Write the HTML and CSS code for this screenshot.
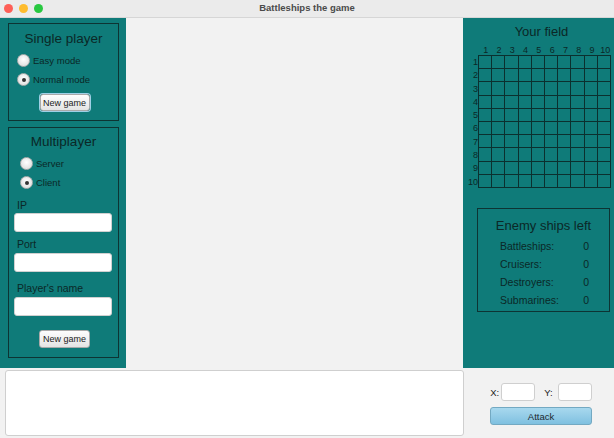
FILE: index.html
```html
<!DOCTYPE html>
<html>
<head>
<meta charset="utf-8">
<link rel="stylesheet" href="styles.css">
</head>
<body>
<div class="window">
  <div class="titlebar">
    <div class="lights"><span class="light red"></span><span class="light yellow"></span><span class="light green"></span></div>
    <div class="title">Battleships the game</div>
  </div>
  <div class="main">
    <div class="left">
      <div class="box single">
        <div class="box-title">Single player</div>
        <label class="radio"><span class="dot"></span>Easy mode</label>
        <label class="radio"><span class="dot on"></span>Normal mode</label>
        <div class="btn-row"><button class="btn">New game</button></div>
      </div>
      <div class="box multi">
        <div class="box-title">Multiplayer</div>
        <label class="radio r2"><span class="dot"></span>Server</label>
        <label class="radio r2"><span class="dot on"></span>Client</label>
        <div class="field-label first">IP</div>
        <div class="input"></div>
        <div class="field-label">Port</div>
        <div class="input"></div>
        <div class="field-label name">Player's name</div>
        <div class="input"></div>
        <div class="btn-row b2"><button class="btn">New game</button></div>
      </div>
    </div>
    <div class="center"></div>
    <div class="right">
      <div class="field-title">Your field</div>
      <div class="board">
        <div class="corner"></div>
        <div class="cols"><span>1</span><span>2</span><span>3</span><span>4</span><span>5</span><span>6</span><span>7</span><span>8</span><span>9</span><span>10</span></div>
        <div class="rows"><span>1</span><span>2</span><span>3</span><span>4</span><span>5</span><span>6</span><span>7</span><span>8</span><span>9</span><span>10</span></div>
        <div class="grid" id="grid"></div>
      </div>
      <div class="ships">
        <div class="ships-title">Enemy ships left</div>
        <div class="ship-row"><span>Battleships:</span><span>0</span></div>
        <div class="ship-row"><span>Cruisers:</span><span>0</span></div>
        <div class="ship-row"><span>Destroyers:</span><span>0</span></div>
        <div class="ship-row"><span>Submarines:</span><span>0</span></div>
      </div>
    </div>
  </div>
  <div class="bottom">
    <div class="log"></div>
    <div class="controls">
      <div class="coords">
        <span class="clabel">X:</span><div class="cinput"></div>
        <span class="clabel y">Y:</span><div class="cinput"></div>
      </div>
      <button class="attack">Attack</button>
    </div>
  </div>
</div>
<script>
  var g = document.getElementById('grid');
  for (var i = 0; i < 100; i++) { var c = document.createElement('div'); c.className = 'cell'; g.appendChild(c); }
</script>
</body>
</html>
```
FILE: styles.css
```css
* { box-sizing: border-box; }
html, body { margin: 0; padding: 0; }
body {
  width: 614px; height: 438px; overflow: hidden;
  font-family: "Liberation Sans", Arial, sans-serif;
  background: #f2f2f2;
}
.window { width: 614px; height: 438px; display: flex; flex-direction: column; }
.titlebar {
  height: 18px; background: #ebebeb; border-bottom: 1px solid #d6d6d6;
  display: flex; align-items: center; position: relative;
}
.lights { display: flex; gap: 6px; padding-left: 4px; }
.light { width: 9px; height: 9px; border-radius: 50%; display: block; }
.red { background: #fe5f57; }
.yellow { background: #febc2e; }
.green { background: #28c840; }
.title {
  position: absolute; left: 0; right: 0; top: 2px; text-align: center;
  font-size: 9.5px; font-weight: bold; color: #4a4a4a;
}
.main { display: flex; height: 350px; }
.left {
  width: 126px; background: #0f7b79; padding: 5px 7px 0 8px;
  display: flex; flex-direction: column; gap: 6px; color: #0b2827;
}
.box { border: 1px solid #0d3433; }
.single { height: 98px; padding-top: 7px; }
.multi { height: 231px; padding-top: 6px; }
.box-title { text-align: center; font-size: 13.5px; color: #0b2827; }
.radio { display: flex; align-items: center; font-size: 9.5px; height: 19px; padding-left: 8px; color: #0b2827; }
.single .box-title { margin-bottom: 5px; }
.multi .box-title { margin-bottom: 5px; }
.r2 { padding-left: 11px; }
.dot {
  width: 13px; height: 13px; border-radius: 50%; margin-right: 3px;
  background: radial-gradient(circle at 50% 40%, #ffffff, #d8d8d8);
  border: 1px solid #b0b0b0; position: relative; display: block;
}
.dot.on::after {
  content: ""; position: absolute; left: 3.5px; top: 3.5px; width: 4px; height: 4px;
  border-radius: 50%; background: #333;
}
.btn-row { display: flex; justify-content: center; margin-top: 5px; padding-left: 2px; }
.btn {
  font-family: "Liberation Sans", Arial, sans-serif; font-size: 9px; color: #222;
  height: 17px; width: 50px; padding: 0; border-radius: 3px;
  background: linear-gradient(#fdfdfd, #e4e4e4); border: 1px solid #a9a9a9;
  box-shadow: 0 0 0 1px #9fd0e6;
}
.b2 .btn { box-shadow: none; height: 18px; width: 51px; }
.field-label { font-size: 10.5px; line-height: 12px; margin: 6px 0 3px 8px; color: #0b2827; }
.field-label.first { margin-top: 7px; margin-bottom: 2px; }
.field-label.name { margin-top: 10px; margin-bottom: 3px; }
.input {
  height: 19px; margin: 0 6px 0 5px; background: #fff; border-radius: 3px;
  border: 1px solid #d0d0d0;
}
.b2 { margin-top: 14px; }
.center { flex: 1; background: #f2f2f2; }
.right {
  width: 151px; background: #0f7b79; color: #0b2827;
  display: flex; flex-direction: column; align-items: center;
}
.field-title { font-size: 13px; margin-top: 6px; text-align: center; padding-left: 6px; }
.board {
  display: grid; grid-template-columns: 11px 133px; grid-template-rows: 12px 133px;
  margin-top: 4px; align-self: flex-start; padding-left: 4px;
}
.cols { display: grid; grid-template-columns: repeat(10, 13.3px); font-size: 9px; align-items: end; padding-left: 1px; }
.cols span { text-align: center; line-height: 10px; }
.rows { display: grid; grid-template-rows: repeat(10, 13.3px); font-size: 9px; }
.rows span { text-align: right; padding-right: 0; line-height: 14px; }
.grid {
  display: grid; grid-template-columns: repeat(10, 1fr); grid-template-rows: repeat(10, 1fr);
  border-left: 1px solid #0b302f; border-top: 1px solid #0b302f;
}
.cell { border-right: 1px solid #0b302f; border-bottom: 1px solid #0b302f; }
.ships {
  width: 133px; height: 104px; border: 1px solid #0d3433; margin-top: 20px; margin-left: 10px;
  padding-top: 9px;
}
.ships-title { font-size: 13px; text-align: center; margin-bottom: 7px; }
.ship-row {
  display: flex; justify-content: space-between; font-size: 10.5px; height: 18px;
  padding: 0 20px 0 22px;
}
.bottom { flex: 1; display: flex; background: #f2f2f2; }
.log {
  width: 459px; margin: 2px 0 2px 5px; background: #fff; border: 1px solid #cfcfcf; border-radius: 3px;
}
.controls { flex: 1; display: flex; flex-direction: column; align-items: center; padding-top: 15px; padding-left: 4px; }
.coords { display: flex; align-items: center; font-size: 9.5px; color: #222; }
.clabel { margin-right: 2px; }
.clabel.y { margin-left: 9px; margin-right: 5px; }
.cinput { width: 34px; height: 18px; background: #fff; border: 1px solid #cfcfcf; border-radius: 3px; }
.attack {
  margin-top: 6px; width: 102px; height: 18px; font-size: 9.5px; color: #1e2a30;
  font-family: "Liberation Sans", Arial, sans-serif;
  background: linear-gradient(#a8d8ee, #7fc0e0); border: 1px solid #73a9c2; border-radius: 3px;
}
```
